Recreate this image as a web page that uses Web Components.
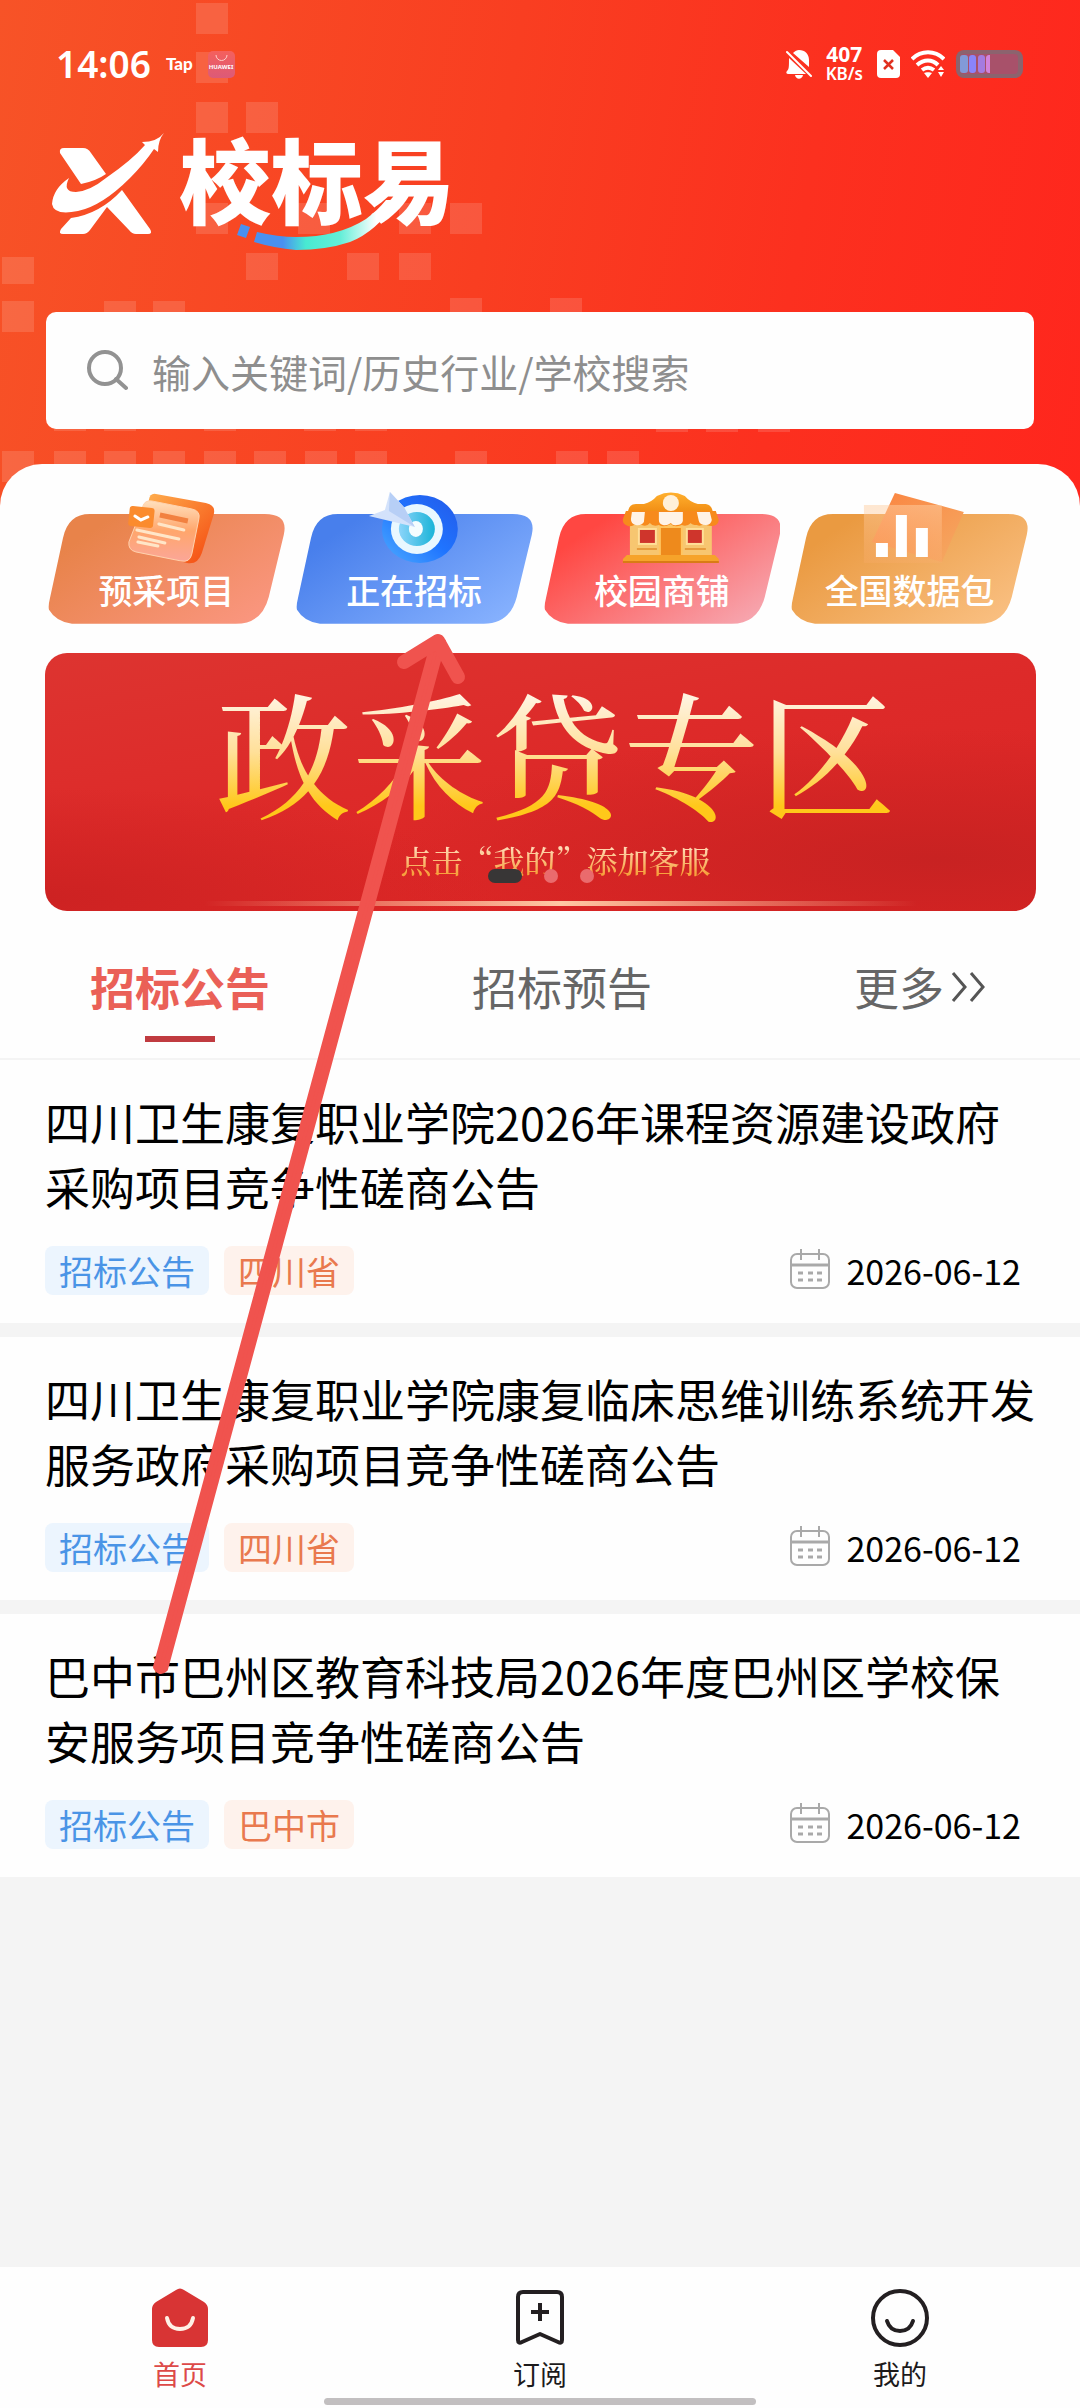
<!DOCTYPE html>
<html lang="zh-CN">
<head>
<meta charset="utf-8">
<meta name="viewport" content="width=device-width, initial-scale=1">
<title>校标易</title>
<style>
  body {
    margin: 0;
    background: #f4f4f4;
    font-family: "Noto Sans CJK SC", sans-serif;
    color: #000;
  }
</style>
</head>
<body>

<app-shell>
  <app-header slot="header"></app-header>

  <category-card kind="plan">预采项目</category-card>
  <category-card kind="target">正在招标</category-card>
  <category-card kind="shop">校园商铺</category-card>
  <category-card kind="data">全国数据包</category-card>

  <promo-banner slot="banner">
    政采贷专区
    <span slot="note">点击“我的”添加客服</span>
  </promo-banner>

  <tab-strip slot="tabs"></tab-strip>

  <notice-item slot="list" type="招标公告" region="四川省" date="2026-06-12">四川卫生康复职业学院2026年课程资源建设政府采购项目竞争性磋商公告</notice-item>
  <notice-item slot="list" type="招标公告" region="四川省" date="2026-06-12">四川卫生康复职业学院康复临床思维训练系统开发服务政府采购项目竞争性磋商公告</notice-item>
  <notice-item slot="list" type="招标公告" region="巴中市" date="2026-06-12">巴中市巴州区教育科技局2026年度巴州区学校保安服务项目竞争性磋商公告</notice-item>

  <bottom-nav slot="nav"></bottom-nav>
  <hint-arrow slot="overlay"></hint-arrow>
</app-shell>

<script>
// small base: every element sets its own template string
class BaseElement extends HTMLElement {
  constructor() {
    super();
    const shadow = this.attachShadow({ mode: 'open' });
    shadow.innerHTML = this.template();
  }

  template() {
    return '<slot></slot>';
  }
}

class AppShell extends BaseElement {
  template() {
    return `
      <style>
        :host {
          display: flex;
          flex-direction: column;
          min-height: 100vh;
          position: relative;
        }
        .panel {
          background: #fefefe;
          border-radius: 42px 42px 0 0;
          margin-top: -42px;
          position: relative;
        }
        .cards {
          display: grid;
          grid-template-columns: repeat(4, 1fr);
          gap: 11px;
          padding: 28px 52px 0 48px;
        }
        .list {
          display: flex;
          flex-direction: column;
          gap: 14px;
        }
        .nav { margin-top: auto; }
      </style>
      <slot name="header"></slot>
      <main class="panel">
        <div class="cards"><slot></slot></div>
        <slot name="banner"></slot>
        <slot name="tabs"></slot>
      </main>
      <div class="list"><slot name="list"></slot></div>
      <div class="nav"><slot name="nav"></slot></div>
      <slot name="overlay"></slot>
    `;
  }
}

class AppHeader extends BaseElement {
  template() {
    // faint squares scattered over the red background
    const squares = [
      [196, 3], [196, 52], [196, 102], [246, 102],
      [196, 203], [298, 203], [399, 203], [450, 203],
      [246, 253], [347, 253], [399, 253], [2, 257],
      [2, 301], [104, 301], [153, 301], [450, 298], [550, 298],
      [54, 400], [104, 400], [204, 400], [304, 400], [355, 400],
      [656, 401], [706, 401], [758, 401],
      [2, 451], [54, 451], [104, 451], [153, 451], [204, 451], [254, 451],
      [305, 451], [355, 451], [455, 451], [556, 451], [607, 451]
    ];
    const rects = squares.map(([x, y]) => {
      const h = y === 253 || y === 257 ? 27 : 31;
      return `<rect x="${x}" y="${y}" width="32" height="${h}"/>`;
    }).join('');

    return `
      <style>
        :host {
          display: block;
          position: relative;
          padding-bottom: 77px;
          background: linear-gradient(100deg, #f75327 0%, #f93e21 45%, #fc301f 72%, #ff261d 100%);
        }
        .squares {
          position: absolute;
          top: 0;
          left: 0;
          fill: #fff;
          opacity: .13;
        }
        .content { position: relative; }
      </style>
      <svg class="squares" width="800" height="500" aria-hidden="true">${rects}</svg>
      <div class="content">
        <status-bar></status-bar>
        <app-logo></app-logo>
        <search-box></search-box>
      </div>
    `;
  }
}

class StatusBar extends BaseElement {
  template() {
    return `
      <style>
        :host {
          display: flex;
          align-items: center;
          justify-content: space-between;
          height: 128px;
          padding: 0 57px 0 56px;
          color: #fff;
          font-family: "Noto Sans", sans-serif;
        }
        .left, .right { display: flex; align-items: center; }
        .time { font-size: 37px; font-weight: 600; line-height: 40px; }
        .tap {
          margin: 0 15px;
          font: 900 17px/20px Lato, sans-serif;
        }
        .right { gap: 11px; }
        .speed {
          display: flex;
          flex-direction: column;
          align-items: center;
          margin: 0 3px;
          font-weight: 700;
          font-size: 21px;
          line-height: 20px;
        }
        .speed small { font-size: 17px; line-height: 20px; font-weight: 600; }
        svg { display: block; }
      </style>
      <div class="left">
        <span class="time">14:06</span>
        <span class="tap">Tap</span>
        <svg width="27" height="27" viewBox="0 0 27 27">
          <defs>
            <linearGradient id="g" x1="0" y1="0" x2="0" y2="1">
              <stop offset="0" stop-color="#f5605c"/><stop offset="1" stop-color="#dc5a78"/>
            </linearGradient>
          </defs>
          <rect width="27" height="27" rx="5" fill="url(#g)"/>
          <path d="M8 4a5.500 5.500 0 0 0 11 0" fill="none" stroke="#ffd0ca" stroke-width="1"/>
          <text x="13" y="18" font-size="6" font-weight="700" text-anchor="middle" fill="#fff">HUAWEI</text>
        </svg>
      </div>
      <div class="right">
        <svg width="26" height="29" viewBox="0 0 26 29" fill="#fff">
          <path d="M7 3c2-2 4-3 6-3 6 0 10 4 10 10v7zM3 8l17 16H2c-2 0-2-2-1-3 2-2 2-4 2-13zM9 25h8c-1 5-7 5-8 0z"/>
          <path d="M1 2l24 24" stroke="#fff" stroke-width="2" stroke-linecap="round"/>
        </svg>
        <span class="speed">407<small>KB/s</small></span>
        <svg width="23" height="28" viewBox="0 0 23 28">
          <path d="M4 0h12l7 7v17a4 4 0 0 1-4 4H4a4 4 0 0 1-4-4V4a4 4 0 0 1 4-4z" fill="#fff"/>
          <path d="M7 10l9 9M16 10l-9 9" stroke="#e0301f" stroke-width="2.500"/>
        </svg>
        <svg width="34" height="28" viewBox="0 0 34 28">
          <g fill="none" stroke="#fff" stroke-width="4">
            <path d="M1 9C10 0 24 0 33 9"/><path d="M6 15c7-6 15-6 21 0"/><path d="M11 20c4-3 8-3 12 0"/>
          </g>
          <path d="M13 23c2-1 6-1 8 0l-4 5z" fill="#fff"/>
          <path d="M27 20l3-4 3 4zM27 22h6l-3 5z" fill="#fff"/>
        </svg>
        <svg width="67" height="28" viewBox="0 0 67 28">
          <rect width="67" height="28" rx="8" fill="#8c636e"/>
          <rect x="4" y="4" width="58" height="20" rx="4" fill="#a8516a"/>
          <rect x="4" y="5" width="8" height="18" rx="3" fill="#829ad8"/>
          <rect x="13" y="5" width="7" height="18" rx="3" fill="#8a84fa"/>
          <rect x="22" y="5" width="7" height="18" rx="3" fill="#a57be0"/>
          <path d="M34 5v18c-4 0-4-2-4-4V9c0-2 0-4 4-4z" fill="#d383dc"/>
        </svg>
      </div>
    `;
  }
}

class AppLogo extends BaseElement {
  template() {
    return `
      <style>
        :host { display: block; margin-top: -20px; padding: 0 52px 60px; }
        svg { display: block; }
        text { font-weight: 900; font-size: 92px; }
      </style>
      <svg width="420" height="144" viewBox="0 -20 420 144" fill="#fff" role="img" aria-label="校标易">
        <defs>
          <linearGradient id="tail">
            <stop offset="0" stop-color="#4a90f0"/>
            <stop offset=".2" stop-color="#4a90f0"/>
            <stop offset=".36" stop-color="#48ead2"/>
            <stop offset=".6" stop-color="#64eed8"/>
            <stop offset=".85" stop-color="#fff"/>
          </linearGradient>
        </defs>
        <path d="M12 20H31Q36 20 39 25L54 46Q44 53 29 56L8 25Q7 20 12 20z"/>
        <path d="M70 62L98 101Q101 106 96 106H84Q80 106 77 102L55 79L38 102Q35 106 31 106H11Q6 106 9 101L19 90Q48 86 70 62z"/>
        <path d="M17 50Q10 64 24 64Q38 63 54 50Q80 32 93 17L90 14Q105 14 112 5Q106 12 106 24L102 21Q92 36 78 50Q50 78 26 83Q2 88 0 76Q1 61 17 50z"/>
        <text x="127" y="89">校标易</text>
        <path d="M189 96L198 99L194 110L185 107z" fill="#4a90f0"/>
        <path d="M205 104Q226 109 244 109Q286 109 314 91Q326 82 334 72H346Q324 104 298 114Q274 122 244 122Q222 120 202 114z" fill="url(#tail)"/>
      </svg>
    `;
  }
}

class SearchBox extends BaseElement {
  template() {
    return `
      <style>
        :host {
          display: flex;
          align-items: center;
          gap: 24px;
          height: 117px;
          margin: 0 46px;
          padding: 0 40px;
          box-sizing: border-box;
          background: #fefefe;
          border-radius: 10px;
        }
        svg { flex: none; }
        input {
          flex: 1;
          min-width: 0;
          padding: 0;
          border: 0;
          outline: 0;
          background: none;
          font: inherit;
          font-size: 39px;
          line-height: 60px;
          height: 60px;
        }
        input::placeholder { color: #8e8e8e; opacity: 1; }
      </style>
      <svg width="42" height="42" viewBox="0 0 42 42" fill="none" stroke="#929292" stroke-width="4" stroke-linecap="round">
        <circle cx="19" cy="18" r="16"/><path d="M30 29l10 9"/>
      </svg>
      <input type="search" aria-label="搜索" placeholder="输入关键词/历史行业/学校搜索">
    `;
  }
}

const CARD_ART = {
  plan: {
    colors: ['#e8834a', '#fb9782'],
    icon: `
      <defs>
        <linearGradient id="b" x1="0" y1="0" x2="1" y2="1"><stop offset="0" stop-color="#ffb04e"/><stop offset="1" stop-color="#f4470f"/></linearGradient>
        <linearGradient id="f" x1="0" y1="0" x2="0" y2="1"><stop offset="0" stop-color="#ffe0bd"/><stop offset=".5" stop-color="#ffa66c"/><stop offset="1" stop-color="#fba698"/></linearGradient>
      </defs>
      <path d="M108 2L158 11Q168 13 166 22L154 61Q150 73 139 71L96 60L101 8Q102 1 108 2z" fill="url(#b)"/>
      <path d="M104 9L144 17Q153 19 151 27L144 62Q142 71 133 69L88 60Q80 58 81 50L95 14Q97 8 104 9z" fill="url(#f)" stroke="#ffd2ae" stroke-width="1"/>
      <path d="M112 23l28 6" stroke="#f28140" stroke-width="5"/>
      <path d="M111 32l25 6M89 38l42 9M91 45l26 6M90 50l20 4" stroke="#ffe6c8" stroke-width="3" stroke-linecap="round"/>
      <rect x="81" y="15" width="25" height="20" rx="3" fill="#fb8b2e" transform="rotate(6 93 25)"/>
      <path d="M87 24l6 4 7-3" fill="none" stroke="#fff" stroke-width="3" stroke-linecap="round"/>
    `
  },
  target: {
    colors: ['#487fec', '#8ab4ff'],
    icon: `
      <defs>
        <linearGradient id="b" x1="1" y1="0" x2="0" y2="1"><stop offset="0" stop-color="#2459e8"/><stop offset=".5" stop-color="#1f74ff"/><stop offset="1" stop-color="#4dacff"/></linearGradient>
        <linearGradient id="f"><stop offset="0" stop-color="#8bd4fa"/><stop offset="1" stop-color="#19b4d8"/></linearGradient>
      </defs>
      <ellipse cx="124" cy="37" rx="38" ry="34" fill="url(#b)"/>
      <ellipse cx="121" cy="37" rx="26" ry="25" fill="#e9f8ff"/>
      <ellipse cx="121" cy="37" rx="18" ry="17" fill="url(#f)"/>
      <ellipse cx="120" cy="37" rx="7" ry="8" fill="#f4fdff"/>
      <path d="M94 0L108 15L119 35L98 30L73 24L89 18z" fill="#d3e2fb"/>
      <path d="M94 0L93 19L119 35L108 15z" fill="#b7cff6"/>
    `
  },
  shop: {
    colors: ['#ff4742', '#f6abb5'],
    icon: `
      <defs>
        <linearGradient id="b" x1="0" y1="0" x2="0" y2="1"><stop offset="0" stop-color="#ffb02e"/><stop offset="1" stop-color="#f08a12"/></linearGradient>
      </defs>
      <path d="M84 22Q84 12 92 12H100Q108 10 113 4Q127-3 141 4Q146 10 154 12H162Q169 13 169 22z" fill="url(#b)"/>
      <circle cx="127" cy="11" r="8" fill="#fff0d8"/>
      <rect x="86" y="30" width="82" height="35" fill="#f7c670"/>
      <rect x="95" y="37" width="17" height="15" fill="#cf352c" stroke="#ffdf98" stroke-width="2"/>
      <rect x="143" y="37" width="16" height="15" fill="#cf352c" stroke="#ffdf98" stroke-width="2"/>
      <rect x="116" y="35" width="22" height="30" fill="#ee8a1c" stroke="#ffc560" stroke-width="2"/>
      <path d="M93 57h20M141 57h21" stroke="#e79b3d" stroke-width="2"/>
      <path d="M82 19H172L175 28Q174 34 168 34Q162 34 161 31Q157 35 153 33Q148 33 147 31Q143 35 138 33Q130 36 127 32Q120 36 115 33Q109 35 106 31Q103 35 98 33Q94 33 92 31Q89 35 84 34Q78 32 79 27z" fill="#f78a1c"/>
      <path d="M88 20H101L100 30Q97 34 92 33Q87 32 87 27zM115 20H139V29Q138 33 133 33Q129 34 127 31Q123 34 119 33Q115 32 115 28zM153 20H166L168 28Q167 33 162 33Q156 33 155 29z" fill="#fff3e6"/>
      <path d="M83 63H171L175 67V71H79V67z" fill="#f6a32a"/>
      <path d="M79 70H175" stroke="#d97b15" stroke-width="2"/>
    `
  },
  data: {
    colors: ['#ea9a41', '#fac184'],
    icon: `
      <defs>
        <linearGradient id="b" x1="0" y1="0" x2="1" y2="1"><stop offset="0" stop-color="#fb8440"/><stop offset=".9" stop-color="#f5a660"/></linearGradient>
        <linearGradient id="f" x1="0" y1="0" x2="0" y2="1"><stop offset="0" stop-color="#ffd0a4" stop-opacity=".5"/><stop offset="1" stop-color="#ffb078" stop-opacity=".2"/></linearGradient>
      </defs>
      <path d="M104 1L173 20L151 70L81 50z" fill="url(#b)"/>
      <rect x="73" y="13" width="78" height="58" fill="url(#f)"/>
      <path d="M85 51h12v14H85zM105 23h11v42h-11zM125 36h12v29h-12z" fill="#fff"/>
    `
  }
};

class CategoryCard extends HTMLElement {
  connectedCallback() {
    const { colors, icon } = CARD_ART[this.getAttribute('kind')];
    const shadow = this.attachShadow({ mode: 'open' });
    shadow.innerHTML = `
      <style>
        :host { display: block; min-width: 0; }
        button {
          display: grid;
          width: 100%;
          padding: 0;
          border: 0;
          background: none;
          color: #fff;
          font: inherit;
          cursor: pointer;
        }
        svg, .label { grid-area: 1 / 1; }
        svg { display: block; width: 100%; height: auto; }
        .label {
          align-self: end;
          padding-bottom: 14px;
          font-size: 34px;
          font-weight: 500;
          line-height: 40px;
          text-align: center;
          white-space: nowrap;
        }
      </style>
      <button type="button">
        <svg viewBox="0 0 237 132" aria-hidden="true">
          <defs>
            <linearGradient id="bg" x1="0" y1=".2" x2="1" y2=".9">
              <stop offset="0.100" stop-color="${colors[0]}"/><stop offset="1" stop-color="${colors[1]}"/>
            </linearGradient>
          </defs>
          <path d="M42 22H217Q241 22 236 43L221 105Q214 132 188 132H24Q8 130 1 118Q0 114 2 106L15 46Q20 22 42 22z" fill="url(#bg)"/>
          ${icon}
        </svg>
        <span class="label"><slot></slot></span>
      </button>
    `;
  }
}

class PromoBanner extends BaseElement {
  template() {
    return `
      <style>
        :host {
          display: flex;
          flex-direction: column;
          align-items: center;
          position: relative;
          height: 258px;
          margin: 29px 44px 0 45px;
          padding-left: 30px;
          box-sizing: border-box;
          overflow: hidden;
          border-radius: 22px;
          background:
            radial-gradient(ellipse at 90% 80%, #c82222 0%, rgba(200, 34, 34, 0) 45%),
            radial-gradient(ellipse at 0% 95%, #cd2222 0%, rgba(205, 34, 34, 0) 32%),
            linear-gradient(170deg, #dd3430 0%, #dd2a29 45%, #dd2423 100%);
          font-family: "Noto Serif CJK SC", "Noto Sans CJK SC", serif;
        }
        .title, .note {
          -webkit-background-clip: text;
          background-clip: text;
          color: transparent;
          white-space: nowrap;
        }
        .title {
          margin-top: 38px;
          font-family: "Liberation Serif", "Noto Serif CJK SC", "Noto Sans CJK SC", serif;
          font-size: 136px;
          font-weight: 500;
          line-height: 144px;
          background-image: linear-gradient(#fff3e0 4%, #ffe09a 42%, #ffc81a 80%);
        }
        .note {
          margin-top: 5px;
          font-size: 31px;
          font-weight: 500;
          line-height: 40px;
          background-image: linear-gradient(#ffd9b4 20%, #f7a13c 85%);
        }
        .line {
          position: absolute;
          left: 16%;
          right: 12%;
          bottom: 5px;
          height: 5px;
          background: linear-gradient(90deg, rgba(255, 190, 150, 0), #ffc9a4 50%, rgba(255, 190, 150, 0));
        }
        .dots {
          position: absolute;
          left: 0;
          right: 0;
          bottom: 28px;
          display: flex;
          justify-content: center;
          gap: 22px;
        }
        .dots i { width: 14px; height: 14px; border-radius: 7px; background: #ea6b6d; }
        .dots .on { width: 34px; background: #383636; }
      </style>
      <div class="title"><slot></slot></div>
      <div class="note"><slot name="note"></slot></div>
      <div class="line"></div>
      <div class="dots"><i class="on"></i><i></i><i></i></div>
    `;
  }
}

class TabStrip extends BaseElement {
  template() {
    return `
      <style>
        :host {
          display: flex;
          justify-content: space-between;
          padding: 46px 95px 16px 90px;
          border-bottom: 2px solid #f4f4f4;
        }
        button {
          display: flex;
          flex-direction: column;
          align-items: center;
          gap: 19px;
          padding: 0;
          border: 0;
          background: none;
          color: #666;
          font: inherit;
          font-size: 45px;
          line-height: 60px;
          cursor: pointer;
        }
        button::after { content: ""; width: 70px; height: 6px; }
        .on { color: #ea6057; font-weight: 700; }
        .on::after { background: #c03b40; }
        .more { display: flex; align-items: center; gap: 7px; }
      </style>
      <button type="button" class="on">招标公告</button>
      <button type="button">招标预告</button>
      <button type="button"><span class="more">更多<svg width="34" height="30" viewBox="0 0 34 30" fill="none" stroke="#555" stroke-width="3"><path d="M2 1l12 14L2 29M20 1l12 14-12 14"/></svg></span></button>
    `;
  }

  connectedCallback() {
    const buttons = this.shadowRoot.querySelectorAll('button');
    buttons.forEach((button) => {
      button.onclick = () => {
        buttons.forEach((b) => b.classList.toggle('on', b === button));
      };
    });
  }
}

class NoticeItem extends HTMLElement {
  connectedCallback() {
    const shadow = this.attachShadow({ mode: 'open' });
    shadow.innerHTML = `
      <style>
        :host { display: block; padding: 29px 45px 28px; background: #fefefe; }
        a {
          display: block;
          color: #000;
          font-size: 45px;
          line-height: 65px;
          text-decoration: none;
        }
        .meta {
          display: flex;
          align-items: center;
          gap: 15px;
          margin-top: 27px;
          padding-right: 14px;
          font-size: 34px;
          line-height: 49px;
        }
        .tag { padding: 0 14px; border-radius: 8px; color: #4a94e6; background: #ecf5fe; }
        .region { color: #e9794e; background: #fef2ec; }
        svg { margin-left: auto; }
      </style>
      <a href="#"><slot></slot></a>
      <div class="meta">
        <span class="tag">${this.getAttribute('type')}</span>
        <span class="tag region">${this.getAttribute('region')}</span>
        <svg width="42" height="44" viewBox="0 0 42 44" fill="none" stroke="#a9a9a9" stroke-width="2" aria-hidden="true">
          <rect x="2" y="6" width="38" height="34" rx="6"/>
          <path d="M2 17h38" stroke-width="3"/><path d="M12 1v11M30 1v11"/>
          <path d="M9 25h5M19 25h5M28 25h5M9 32h5M19 32h5M28 32h5" stroke-width="3"/>
        </svg>
        <time datetime="${this.getAttribute('date')}">${this.getAttribute('date')}</time>
      </div>
    `;
  }
}

class BottomNav extends BaseElement {
  template() {
    return `
      <style>
        :host { display: block; background: #fefefe; padding: 21px 0 3px; }
        nav { display: grid; grid-template-columns: repeat(3, 1fr); }
        a {
          display: flex;
          flex-direction: column;
          align-items: center;
          gap: 11px;
          color: #1c1a1b;
          font-size: 27px;
          line-height: 30px;
          text-decoration: none;
        }
        .on { color: #dd4a48; }
        .bar { width: 40%; height: 7px; margin: 9px auto 0; border-radius: 4px; background: #c2bfc0; }
      </style>
      <nav>
        <a href="#" class="on">
          <svg width="60" height="60" viewBox="0 0 60 60">
            <path d="M26 2Q30-1 34 2L54 14Q58 17 58 21V52Q58 59 51 59H9Q2 59 2 52V21Q2 17 6 14z" fill="#d83434"/>
            <path d="M17 30Q19 41 30 41Q41 41 43 30" fill="none" stroke="#fff1e6" stroke-width="4" stroke-linecap="round"/>
          </svg>首页
        </a>
        <a href="#">
          <svg width="60" height="60" viewBox="0 0 60 60" fill="none" stroke="#231f21" stroke-width="4" stroke-linejoin="round">
            <path d="M13 4H47Q52 4 52 9V52Q52 56 48 54L30 46L12 54Q8 56 8 52V9Q8 4 13 4z"/>
            <path d="M30 15v18M21 24h18"/>
          </svg>订阅
        </a>
        <a href="#">
          <svg width="60" height="60" viewBox="0 0 60 60" fill="none" stroke="#231f21" stroke-width="4" stroke-linecap="round">
            <circle cx="30" cy="30" r="27"/><path d="M17 33Q20 43 30 43Q40 43 43 33"/>
          </svg>我的
        </a>
      </nav>
      <div class="bar"></div>
    `;
  }
}

// hand-drawn arrow pointing at the second category card
class HintArrow extends BaseElement {
  template() {
    return `
      <style>
        :host {
          position: absolute;
          top: 620px;
          left: 140px;
          pointer-events: none;
        }
        svg { display: block; }
      </style>
      <svg width="340" height="1060" viewBox="140 620 340 1060" fill="#f0534e" stroke="#f0534e" stroke-linejoin="round" stroke-linecap="round" aria-hidden="true">
        <path d="M434 641L443 642L165 1669Q160 1674 156 1667z" stroke-width="6"/>
        <path d="M404 662L438 641L458 677" fill="none" stroke-width="14"/>
      </svg>
    `;
  }
}

customElements.define('app-shell', AppShell);
customElements.define('status-bar', StatusBar);
customElements.define('app-logo', AppLogo);
customElements.define('search-box', SearchBox);
customElements.define('app-header', AppHeader);
customElements.define('category-card', CategoryCard);
customElements.define('promo-banner', PromoBanner);
customElements.define('tab-strip', TabStrip);
customElements.define('notice-item', NoticeItem);
customElements.define('bottom-nav', BottomNav);
customElements.define('hint-arrow', HintArrow);
</script>
</body>
</html>
